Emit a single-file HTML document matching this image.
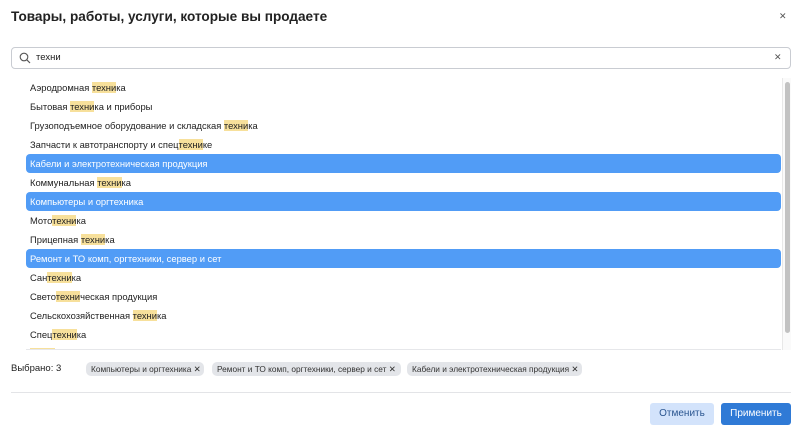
<!DOCTYPE html>
<html><head><meta charset="utf-8"><style>
*{box-sizing:border-box;margin:0;padding:0}
body{width:800px;height:448px;background:#fff;font-family:"Liberation Sans",sans-serif;color:#222;position:relative;overflow:hidden}
.t{position:absolute;left:11px;top:9px;font-size:13.6px;font-weight:bold;color:#222}
.x{position:absolute;left:779px;top:11px;font-size:9px;color:#555}
.s{position:absolute;left:11px;top:47px;width:780px;height:22px;border:1px solid #c9ccd2;border-radius:4px}
.s span{position:absolute;left:24px;top:4px;font-size:9.5px}
.s .c{left:762px;top:4px;font-size:9px;color:#555}
.list{position:absolute;left:26px;top:78px;width:755px;height:272px;overflow:hidden;border-bottom:1px solid #e6e7ea}
.r{height:19px;line-height:19px;font-size:9.4px;padding-left:4px;color:#222;white-space:nowrap}
.r.a{background:#519cf6;color:#fff;border-radius:4px}
.r b{font-weight:normal;background:#f7e09b}
.sb{position:absolute;left:782px;top:78px;width:9px;height:272px;background:#fafafa;border-left:1px solid #e8e8e8}
.sb i{position:absolute;left:2px;top:4px;width:5px;height:251px;background:#c2c2c2;border-radius:3px}
.v{position:absolute;left:11px;top:363px;font-size:9.5px}
.tag{position:absolute;top:362px;height:14px;line-height:14px;background:#e3e5e9;border-radius:5px;font-size:8.3px;padding-left:5px;color:#333;white-space:nowrap}
.hr{position:absolute;left:11px;top:392px;width:780px;height:1px;background:#e3e4e7}
.b{position:absolute;top:403px;height:22px;line-height:22px;font-size:10px;text-align:center;border-radius:3px}
</style></head><body>
<div class="t">Товары, работы, услуги, которые вы продаете</div>
<div class="x">✕</div>
<div class="s"><svg style="position:absolute;left:7px;top:4px" width="12" height="12" viewBox="0 0 12 12"><circle cx="5" cy="5" r="3.8" fill="none" stroke="#555" stroke-width="1.1"/><line x1="7.8" y1="7.8" x2="11" y2="11" stroke="#555" stroke-width="1.2"/></svg><span>техни</span><span class="c">✕</span></div>
<div class="list">
<div class="r">Аэродромная <b>техни</b>ка</div>
<div class="r">Бытовая <b>техни</b>ка и приборы</div>
<div class="r">Грузоподъемное оборудование и складская <b>техни</b>ка</div>
<div class="r">Запчасти к автотранспорту и спец<b>техни</b>ке</div>
<div class="r a">Кабели и электротехническая продукция</div>
<div class="r">Коммунальная <b>техни</b>ка</div>
<div class="r a">Компьютеры и оргтехника</div>
<div class="r">Мото<b>техни</b>ка</div>
<div class="r">Прицепная <b>техни</b>ка</div>
<div class="r a">Ремонт и ТО комп, оргтехники, сервер и сет</div>
<div class="r">Сан<b>техни</b>ка</div>
<div class="r">Свето<b>техни</b>ческая продукция</div>
<div class="r">Сельскохозяйственная <b>техни</b>ка</div>
<div class="r">Спец<b>техни</b>ка</div>
<div class="r"><b>Техни</b>ка</div>
</div>
<div class="sb"><i></i></div>
<div class="v">Выбрано: 3</div>
<div class="tag" style="left:86px;width:118px">Компьютеры и оргтехника ✕</div>
<div class="tag" style="left:212px;width:189px">Ремонт и ТО комп, оргтехники, сервер и сет ✕</div>
<div class="tag" style="left:407px;width:175px">Кабели и электротехническая продукция ✕</div>
<div class="hr"></div>
<div class="b" style="left:650px;width:64px;background:#d3e3fb;color:#2a5590">Отменить</div>
<div class="b" style="left:721px;width:70px;background:#2f7ad6;color:#fff">Применить</div>
</body></html>
